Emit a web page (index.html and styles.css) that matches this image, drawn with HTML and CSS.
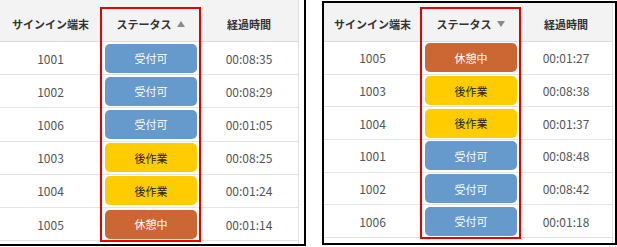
FILE: index.html
```html
<!DOCTYPE html>
<html lang="ja">
<head>
<meta charset="utf-8">
<title>サインイン端末ステータス</title>
<link rel="stylesheet" href="styles.css">
</head>
<body>
<div class="page">
  <section class="panel panel-asc">
    <div class="grid">
      <div class="row head">
        <div class="cell">サインイン端末</div>
        <div class="cell">ステータス<svg class="sort" width="8" height="6" viewBox="0 0 8 6"><path d="M4 0L8 6H0Z"/></svg></div>
        <div class="cell">経過時間</div>
      </div>
      <div class="row"><div class="cell">1001</div><div class="cell"><span class="badge ready">受付可</span></div><div class="cell">00:08:35</div></div>
      <div class="row"><div class="cell">1002</div><div class="cell"><span class="badge ready">受付可</span></div><div class="cell">00:08:29</div></div>
      <div class="row"><div class="cell">1006</div><div class="cell"><span class="badge ready">受付可</span></div><div class="cell">00:01:05</div></div>
      <div class="row"><div class="cell">1003</div><div class="cell"><span class="badge wrap">後作業</span></div><div class="cell">00:08:25</div></div>
      <div class="row"><div class="cell">1004</div><div class="cell"><span class="badge wrap">後作業</span></div><div class="cell">00:01:24</div></div>
      <div class="row"><div class="cell">1005</div><div class="cell"><span class="badge break">休憩中</span></div><div class="cell">00:01:14</div></div>
    </div>
    <div class="focus"></div>
  </section>

  <section class="panel panel-desc">
    <div class="grid">
      <div class="row head">
        <div class="cell">サインイン端末</div>
        <div class="cell">ステータス<svg class="sort" width="8" height="6" viewBox="0 0 8 6"><path d="M0 0H8L4 6Z"/></svg></div>
        <div class="cell">経過時間</div>
      </div>
      <div class="row"><div class="cell">1005</div><div class="cell"><span class="badge break">休憩中</span></div><div class="cell">00:01:27</div></div>
      <div class="row"><div class="cell">1003</div><div class="cell"><span class="badge wrap">後作業</span></div><div class="cell">00:08:38</div></div>
      <div class="row"><div class="cell">1004</div><div class="cell"><span class="badge wrap">後作業</span></div><div class="cell">00:01:37</div></div>
      <div class="row"><div class="cell">1001</div><div class="cell"><span class="badge ready">受付可</span></div><div class="cell">00:08:48</div></div>
      <div class="row"><div class="cell">1002</div><div class="cell"><span class="badge ready">受付可</span></div><div class="cell">00:08:42</div></div>
      <div class="row"><div class="cell">1006</div><div class="cell"><span class="badge ready">受付可</span></div><div class="cell">00:01:18</div></div>
    </div>
    <div class="focus"></div>
  </section>
</div>
</body>
</html>
```

FILE: styles.css
```css
* { box-sizing: border-box; }

html, body {
  margin: 0;
  background: #fff;
}

body {
  font-family: "Noto Sans CJK JP", "Noto Sans", sans-serif;
  color: #555;
  overflow: hidden;
}

.page {
  display: flex;
  align-items: flex-start;
  gap: 16px;
}

/* framed table panels */
.panel {
  position: relative;
  border: 2px solid #000;
  background: #fff;
}

.panel-asc {
  margin: -2px 0 0 -2px;
  width: 308px;
  height: 248px;
  padding-right: 5px;
  --cols: 101px 99px 98px;
  --head-h: 42px;
  --head-pad: 7px;
  --row-h: 33.2px;
}

.panel-desc {
  margin-top: 1px;
  width: 295px;
  height: 244px;
  padding-right: 2px;
  --cols: 97px 99px 92px;
  --head-h: 39px;
  --head-pad: 3px;
  --row-h: 32.7px;
}

.grid {
  border-right: 1px solid #e0e0e0;
  height: 100%;
}

.row {
  display: grid;
  grid-template-columns: var(--cols);
  height: var(--row-h);
  border-bottom: 1px solid #e3e3e3;
  background: #fff;
}

.cell {
  display: flex;
  align-items: center;
  justify-content: center;
  font-size: 12px;
  white-space: nowrap;
}

.head {
  height: var(--head-h);
  padding-top: var(--head-pad);
  background: #f3f3f3;
  border-bottom: 1px solid #dcdcdc;
}

.head .cell {
  font-size: 11px;
  font-weight: 700;
  color: #333;
}

.sort {
  margin-left: 5px;
  fill: #8a8a8a;
}

/* status pills */
.badge {
  display: flex;
  align-items: center;
  justify-content: center;
  width: 92px;
  height: 29px;
  margin-left: 1px;
  border-radius: 5px;
  font-size: 11px;
  color: #fff;
}

.ready { background: #6699cc; }
.wrap  { background: #ffcc00; color: #222; }
.break { background: #cc6633; }

/* red outline around the status column */
.focus {
  position: absolute;
  border: 2px solid #e60000;
  pointer-events: none;
}

.panel-asc .focus {
  left: 100px;
  top: 7px;
  width: 101px;
  height: 235px;
}

.panel-desc .focus {
  left: 96px;
  top: 4px;
  width: 101px;
  height: 232px;
}
```
